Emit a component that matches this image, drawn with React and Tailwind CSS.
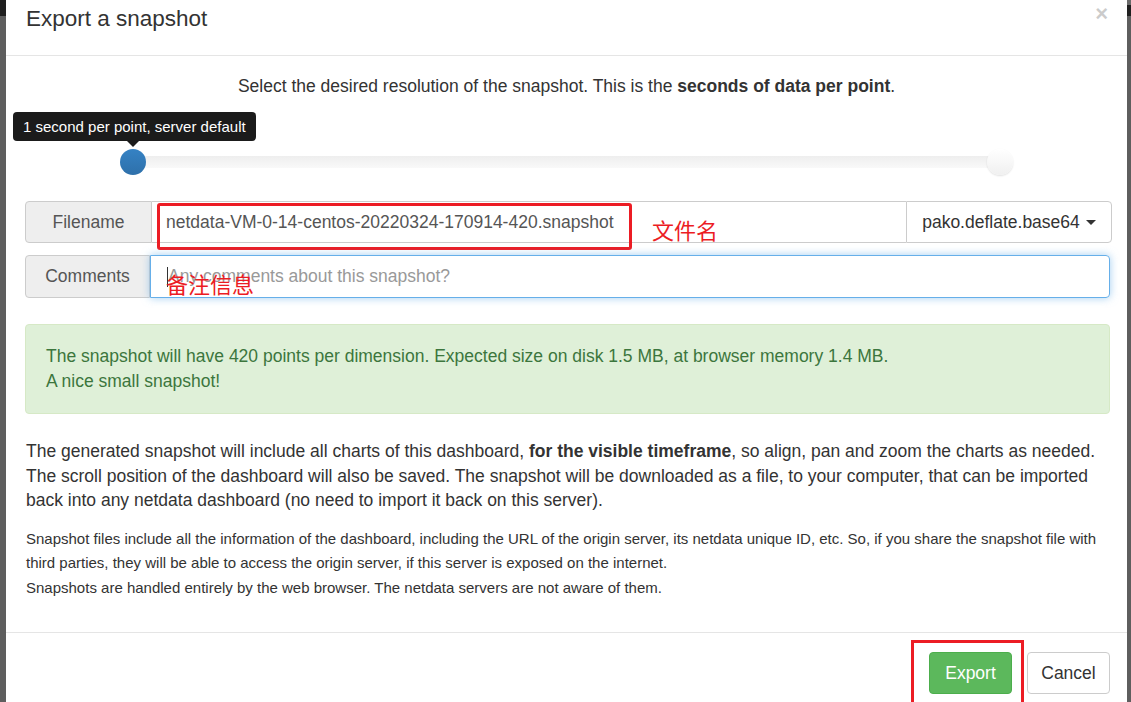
export default function App() {
  const font = { fontFamily: '"Liberation Sans", Arial, "Noto Sans CJK SC", sans-serif' };
  return (
    <div className="w-[1131px] h-[702px] flex overflow-hidden bg-white" style={font}>
      <div className="w-[6px] h-full flex flex-col">
        <div className="h-[16px] bg-[#1f1f1f]"></div>
        <div className="flex-1 bg-[#5e5e5e]"></div>
      </div>
      <div className="flex-1 h-full bg-white flex flex-col text-[#333]">
        {/* header */}
        <div className="h-[56px] shrink-0 border-b border-[#e5e5e5] pl-[20px] pr-[19px] pt-[5px] flex items-start justify-between">
          <div className="text-[22.5px] leading-[28px]">Export a snapshot</div>
          <div className="text-[22px] leading-[22px] font-bold text-black opacity-20 mt-[-2px]">×</div>
        </div>
        {/* body */}
        <div className="flex-1 px-[20px] pt-[19px]">
          <div className="text-center text-[17.5px] leading-[22px]">
            Select the desired resolution of the snapshot. This is the <b>seconds of data per point</b>.
          </div>
          <div className="relative h-[80px] mt-[8px] pt-[51px]">
            <div className="absolute left-[-13px] top-[7px] h-[29px] px-[10px] rounded-[4px] bg-[#1b1b1b] text-white text-[15px] leading-[29px] whitespace-nowrap">
              1 second per point, server default
              <div className="absolute left-[114px] top-[29px] w-0 h-0 border-l-[6px] border-r-[6px] border-t-[6px] border-l-transparent border-r-transparent border-t-[#1b1b1b]"></div>
            </div>
            <div className="relative mx-[107px] h-[12px] rounded-[6px] bg-gradient-to-b from-[#eeeeee] to-[#f9f9f9]">
              <div className="absolute left-[-13px] top-[-7px] w-[26px] h-[26px] rounded-full bg-gradient-to-b from-[#3582c4] to-[#2e70aa]"></div>
              <div className="absolute right-[-13px] top-[-7px] w-[26px] h-[26px] rounded-full bg-gradient-to-b from-[#ffffff] to-[#f0f0f0] shadow-[0_1px_2px_rgba(0,0,0,0.12)]"></div>
            </div>
          </div>
          {/* filename row */}
          <div className="relative flex h-[42px] mt-[16px] ml-[-1px] mr-[-5px] text-[17.5px]">
            <div className="w-[127px] shrink-0 flex items-center justify-center bg-[#eeeeee] border border-[#cccccc] rounded-l-[4px] text-[#555]">Filename</div>
            <div className="flex-1 flex items-center pl-[14px] border-y border-[#cccccc] text-[#555] whitespace-nowrap">netdata-VM-0-14-centos-20220324-170914-420.snapshot</div>
            <div className="w-[206px] shrink-0 flex items-center justify-center gap-[6px] border border-[#cccccc] rounded-r-[4px] bg-white text-[#333]">
              pako.deflate.base64
              <span className="w-0 h-0 border-l-[5px] border-r-[5px] border-t-[5px] border-l-transparent border-r-transparent border-t-[#333]"></span>
            </div>
            <div className="absolute left-[132px] top-[2px] w-[475px] h-[47px] border-[3px] border-[#ec1c24] rounded-[3px]"></div>
            <div className="absolute left-[627px] top-[16px] text-[22px] leading-[30px] text-[#ec1c24]">文件名</div>
          </div>
          {/* comments row */}
          <div className="relative flex h-[43px] mt-[12px] ml-[-1px] mr-[-3px] text-[17.5px]">
            <div className="w-[125px] shrink-0 flex items-center justify-center bg-[#eeeeee] border border-[#cccccc] rounded-l-[4px] text-[#555]">Comments</div>
            <div className="flex-1 flex items-center pl-[16px] border border-[#66afe9] rounded-r-[4px] shadow-[0_0_8px_rgba(102,175,233,0.6)] text-[#999] whitespace-nowrap">
              <span className="w-[1px] h-[20px] bg-[#333]"></span>
              Any comments about this snapshot?
            </div>
            <div className="absolute left-[141px] top-[16px] text-[22px] leading-[30px] text-[#ec1c24]">备注信息</div>
          </div>
          {/* alert */}
          <div className="mt-[26px] ml-[-1px] mr-[-3px] h-[90px] bg-[#dff0d8] border border-[#d6e9c6] rounded-[4px] px-[20px] pt-[19px] text-[#3c763d] text-[17.5px] leading-[25px]">
            <div>The snapshot will have 420 points per dimension. Expected size on disk 1.5 MB, at browser memory 1.4 MB.</div>
            <div>A nice small snapshot!</div>
          </div>
          <p className="mt-[25px] text-[17.5px] leading-[24.5px] text-[#333]">
            The generated snapshot will include all charts of this dashboard, <b>for the visible timeframe</b>, so align, pan and zoom the charts as needed. The scroll position of the dashboard will also be saved. The snapshot will be downloaded as a file, to your computer, that can be imported back into any netdata dashboard (no need to import it back on this server).
          </p>
          <p className="mt-[14px] text-[15px] leading-[24.5px] text-[#333]">
            Snapshot files include all the information of the dashboard, including the URL of the origin server, its netdata unique ID, etc. So, if you share the snapshot file with third parties, they will be able to access the origin server, if this server is exposed on the internet.
            <br />
            Snapshots are handled entirely by the web browser. The netdata servers are not aware of them.
          </p>
        </div>
        {/* footer */}
        <div className="h-[70px] shrink-0 border-t border-[#e5e5e5] flex justify-end items-start pt-[19px] pr-[17px] gap-[15px] text-[17.5px]">
          <div className="relative w-[83px] h-[42px] rounded-[4px] bg-[#5cb85c] border border-[#4cae4c] text-white flex items-center justify-center">
            Export
            <div className="absolute left-[-19px] top-[-13px] w-[113px] h-[70px] border-[3px] border-[#ec1c24]"></div>
          </div>
          <div className="w-[83px] h-[42px] rounded-[4px] bg-white border border-[#cccccc] text-[#333] flex items-center justify-center">Cancel</div>
        </div>
      </div>
      <div className="w-[4px] h-full flex flex-col">
        <div className="h-[5px] bg-[#6a6a6a]"></div>
        <div className="h-[11px] bg-[#1f1f1f]"></div>
        <div className="flex-1 bg-[#5e5e5e]"></div>
      </div>
    </div>
  );
}
